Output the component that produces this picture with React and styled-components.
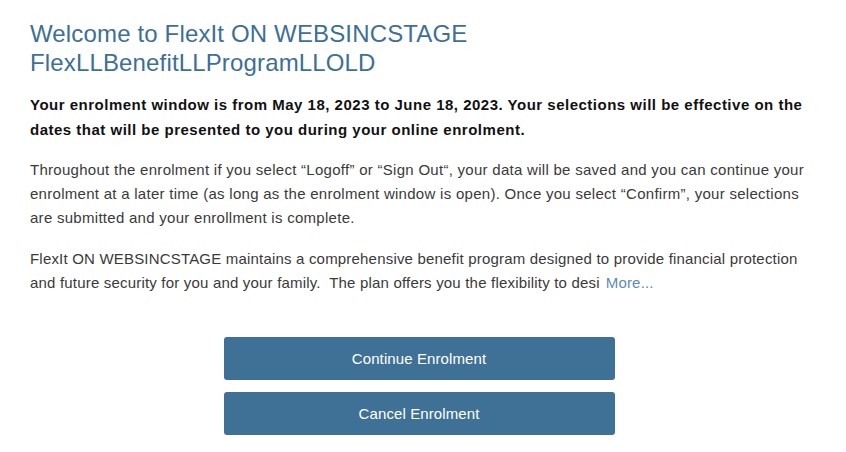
import React from 'react';
import styled, { createGlobalStyle } from 'styled-components';

const GlobalStyle = createGlobalStyle`
  body {
    margin: 0;
    background: #fff;
    font-family: "Liberation Sans", Arial, sans-serif;
  }
`;

const Page = styled.main`
  padding: 19px 30px 0 30px;
  max-width: 778px;
`;

const Title = styled.h1`
  margin: 0 0 15px;
  font-size: 24px;
  line-height: 29px;
  font-weight: 400;
  letter-spacing: 0.15px;
  color: #3d6f98;
`;

const Lead = styled.p`
  margin: 0 0 16px;
  font-size: 15px;
  line-height: 25px;
  font-weight: 700;
  letter-spacing: 0.5px;
  color: #111;
  white-space: nowrap;
`;

const Text = styled.p`
  margin: 0 0 17px;
  font-size: 15px;
  line-height: 24px;
  letter-spacing: ${p => p.$spacing || '0.28px'};
  color: #3a3a3a;
  white-space: nowrap;
`;

const MoreLink = styled.a`
  color: #5b8bbb;
  text-decoration: none;
  margin-left: 6px;
  cursor: pointer;
`;

const Actions = styled.div`
  display: flex;
  flex-direction: column;
  align-items: center;
  gap: 12px;
  margin-top: 42px;
`;

const Button = styled.button`
  width: 391px;
  height: 43px;
  border: none;
  border-radius: 3px;
  background: #3f7096;
  color: #fff;
  font-family: inherit;
  font-size: 15px;
  letter-spacing: 0.1px;
  cursor: pointer;
`;

const App = () => {
  return (
    <>
      <GlobalStyle />
      <Page>
        <Title>
          Welcome to FlexIt ON WEBSINCSTAGE
          <br />
          FlexLLBenefitLLProgramLLOLD
        </Title>
        <Lead>
          Your enrolment window is from May 18, 2023 to June 18, 2023. Your selections will be effective on the
          <br />
          dates that will be presented to you during your online enrolment.
        </Lead>
        <Text>
          Throughout the enrolment if you select “Logoff” or “Sign Out“, your data will be saved and you can continue your
          <br />
          enrolment at a later time (as long as the enrolment window is open). Once you select “Confirm”, your selections
          <br />
          are submitted and your enrollment is complete.
        </Text>
        <Text $spacing="0.19px">
          FlexIt ON WEBSINCSTAGE maintains a comprehensive benefit program designed to provide financial protection
          <br />
          and future security for you and your family.&nbsp; The plan offers you the flexibility to desi
          <MoreLink>More...</MoreLink>
        </Text>
        <Actions>
          <Button>Continue Enrolment</Button>
          <Button>Cancel Enrolment</Button>
        </Actions>
      </Page>
    </>
  );
};

export default App;
